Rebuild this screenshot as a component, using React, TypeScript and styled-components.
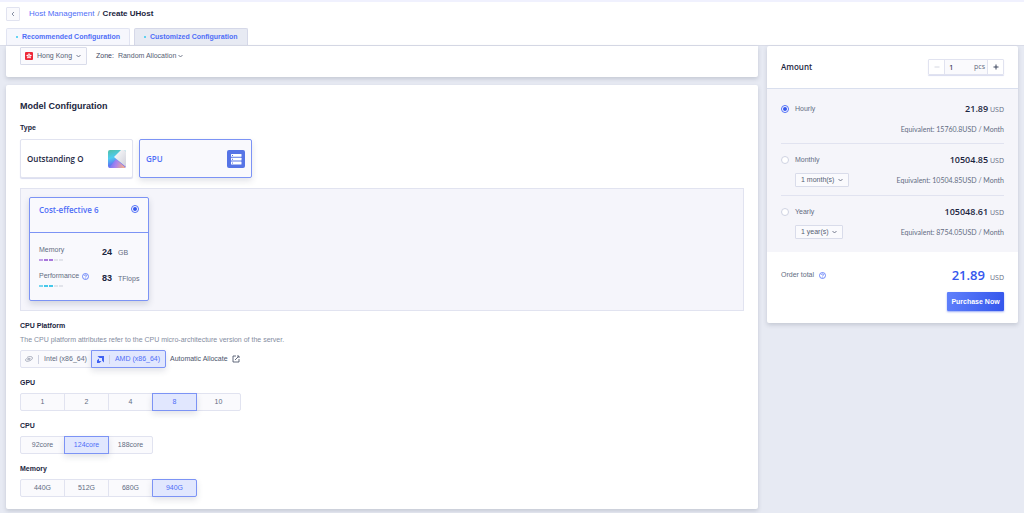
import React, { useState } from "react";
import styled, { createGlobalStyle, css } from "styled-components";

const sans = `"Liberation Sans", Arial, sans-serif`;
const human = `"Open Sans", "Noto Sans", sans-serif`;
const note = `Lato, "Open Sans", sans-serif`;
const blue = "#4f6ef7";
const ink = "#1b2540";
const grey = "#636c82";
const line = "#e1e3f0";

const GlobalStyle = createGlobalStyle`
  * { box-sizing: border-box; }
  html { min-height: 100%; background: #e7eaf3; }
  body { margin: 0; font: 7px/10px ${sans}; color: ${grey}; }
  button, input, select { font: inherit; color: inherit; margin: 0; }
  button, select { cursor: pointer; }
  h1, h2, h3, p, fieldset { margin: 0; padding: 0; border: 0; }
`;

const Header = styled.header`
  background: #fff;
  border-top: 2px solid #f0f1fe;
  border-bottom: 1px solid #d9dce8;
  padding: 5px 6px 0;
`;
const Breadcrumb = styled.nav`
  display: flex;
  align-items: center;
  gap: 3px;
  height: 14px;
  font-size: 8px;
  a { color: ${blue}; text-decoration: none; }
  strong { color: ${ink}; }
`;
const BackButton = styled.button`
  display: grid;
  place-items: center;
  width: 14px;
  height: 14px;
  margin-right: 6px;
  padding: 0;
  background: #fafafd;
  border: 1px solid ${line};
  border-radius: 1px;
`;
const Tabs = styled.div`
  display: flex;
  gap: 4px;
  margin-top: 7px;
`;
const Tab = styled.button<{ $active?: boolean }>`
  display: flex;
  align-items: center;
  gap: 4px;
  height: 17px;
  padding: 0 9px;
  border: 1px solid ${(p) => (p.$active ? "#d5d8e8" : "#e1e4f2")};
  border-bottom: 0;
  border-radius: 2px 2px 0 0;
  background: ${(p) => (p.$active ? "#e7eaf3" : "#f6f7fd")};
  color: ${blue};
  font-weight: 700;
  &::before { content: ""; width: 2px; height: 2px; border-radius: 50%; background: #35c8ef; }
`;

const Page = styled.main`
  display: flex;
  align-items: flex-start;
  gap: 9px;
  padding: 0 6px 5px;
`;
const Column = styled.div`
  flex: 1;
  min-width: 0;
  display: flex;
  flex-direction: column;
  gap: 8px;
`;
const Card = styled.section`
  background: #fff;
  border-radius: 2px;
  box-shadow: 0 2px 4px rgba(60, 68, 90, 0.2);
`;
const RegionCard = styled(Card)`
  display: flex;
  align-items: center;
  gap: 9px;
  padding: 1px 14px 12px;
  border-radius: 0 0 2px 2px;
`;
const ModelCard = styled(Card)`
  padding: 15px 14px 12px;
`;

const SelectBox = styled.div<{ $framed?: boolean; $width: number }>`
  display: grid;
  align-items: center;
  width: ${(p) => p.$width}px;
  color: #555e74;
  > * { grid-area: 1 / 1; }
  > svg { pointer-events: none; }
  > svg:last-child { justify-self: end; margin-right: 5px; }
  ${(p) => p.$framed && css`
    border: 1px solid #d9dcea;
    border-radius: 1px;
    background: #fafafd;
  `}
`;
const Select = styled.select<{ $height: number; $indent: number }>`
  appearance: none;
  width: 100%;
  height: ${(p) => p.$height}px;
  padding: 0 10px 0 ${(p) => p.$indent}px;
  border: 0;
  background: none;
  outline: none;
`;
const ZoneField = styled.div`
  display: flex;
  align-items: center;
  gap: 4px;
  color: #3d465e;
`;

const Title = styled.h2`
  font-size: 9px;
  line-height: 12px;
  color: ${ink};
`;
const Label = styled.h3`
  font-size: 7px;
  line-height: 10px;
  color: ${ink};
`;
const Hint = styled.p`
  margin-top: 4px;
  color: #858da1;
`;
const Group = styled.section`
  margin-top: 10px;
`;
const TypeGroup = styled(Group)`
  margin-top: 11px;
`;
const TypeRow = styled.div`
  display: flex;
  gap: 6px;
  margin-top: 6px;
`;
const TypeCard = styled.button<{ $active?: boolean }>`
  display: flex;
  align-items: center;
  justify-content: space-between;
  width: 113px;
  height: 39px;
  padding: 0 6px;
  border: 1px solid ${(p) => (p.$active ? "#7c93f5" : line)};
  border-radius: 2px;
  background: ${(p) => (p.$active ? "#f9f9fd" : "#fff")};
  box-shadow: ${(p) => (p.$active ? "0 3px 6px rgba(50, 60, 90, 0.14)" : "0 1px 1px #d9dcf0")};
  color: ${(p) => (p.$active ? blue : ink)};
  font: 600 8px/10px ${human};
`;
const ModelPanel = styled.div`
  display: flex;
  margin-top: 10px;
  padding: 8px;
  height: 123px;
  background: #f5f5fb;
  border: 1px solid ${line};
`;
const ModelOption = styled.label`
  display: block;
  width: 120px;
  height: 104px;
  border: 1px solid #7c93f5;
  border-radius: 2px;
  background: #f9f9fd;
  box-shadow: 0 3px 6px rgba(50, 60, 90, 0.18);
`;
const OptionHead = styled.div`
  display: flex;
  align-items: flex-start;
  justify-content: space-between;
  height: 35px;
  padding: 7px 9px 0;
  border-bottom: 1px solid #7c93f5;
  color: ${blue};
  font: 600 8px/10px ${human};
`;
const Specs = styled.div`
  display: grid;
  gap: 5px;
  padding: 12px 8px 0 9px;
`;
const Spec = styled.div`
  display: grid;
  grid-template-columns: 1fr 16px 22px;
  align-items: start;
  height: 21px;
`;
const SpecName = styled.div`
  display: flex;
  align-items: center;
  gap: 3px;
`;
const SpecValue = styled.strong`
  margin-top: 2px;
  font-size: 9px;
  color: ${ink};
`;
const SpecUnit = styled.span`
  margin-top: 3px;
`;
const Meter = styled.div<{ $color: string }>`
  display: flex;
  gap: 1px;
  margin-top: 4px;
  i { width: 4px; height: 2px; background: #e2e4eb; }
  i:nth-child(-n + 3) { background: ${(p) => p.$color}; }
  i:first-child { opacity: 0.7; }
`;

const Radio = styled.input`
  appearance: none;
  flex: none;
  display: grid;
  place-items: center;
  width: 8px;
  height: 8px;
  border: 1px solid #cfd3e2;
  border-radius: 50%;
  background: #fff;
  &:checked { border-color: ${blue}; }
  &:checked::before { content: ""; width: 4px; height: 4px; border-radius: 50%; background: #3557ee; }
`;

const ButtonRow = styled.div`
  display: flex;
  align-items: center;
  margin-top: 5px;
`;
const Segment = styled.button<{ $active?: boolean; $width?: number }>`
  display: flex;
  align-items: center;
  justify-content: center;
  gap: 5px;
  position: relative;
  z-index: ${(p) => (p.$active ? 1 : 0)};
  width: ${(p) => p.$width ?? 45}px;
  height: 18px;
  padding: 0;
  border: 1px solid ${(p) => (p.$active ? "#7c93f5" : line)};
  background: ${(p) => (p.$active ? "#e1e7fe" : "#fafafd")};
  box-shadow: ${(p) => (p.$active ? "0 3px 6px rgba(50, 60, 90, 0.14)" : "none")};
  color: ${(p) => (p.$active ? blue : grey)};
  & + & { margin-left: -1px; }
  &:first-child { border-radius: 2px 0 0 2px; }
  &:last-of-type { border-radius: 0 2px 2px 0; }
`;
const Rule = styled.span`
  width: 1px;
  height: 9px;
  background: #cdd1e0;
`;
const AutoLink = styled.a`
  display: flex;
  align-items: center;
  gap: 4px;
  margin-left: 4px;
  color: #4b546b;
  text-decoration: none;
`;

const Summary = styled(Card)`
  flex: 0 0 251px;
  font-family: ${human};
`;
const AmountRow = styled.div`
  display: flex;
  align-items: center;
  justify-content: space-between;
  height: 43px;
  padding: 0 14px;
  border-bottom: 1px solid #d9dfee;
  label { color: ${ink}; font-weight: 600; font-size: 8px; }
`;
const Stepper = styled.div`
  display: flex;
  height: 16px;
  border: 1px solid ${line};
  border-radius: 1px;
  box-shadow: 0 1px 1px #d9dcf0;
`;
const StepButton = styled.button`
  display: grid;
  place-items: center;
  width: 15px;
  padding: 0;
  border: 0;
  background: #fff;
  color: #3d465e;
  &:disabled { color: #d5d8e2; }
`;
const StepField = styled.div`
  display: flex;
  align-items: center;
  width: 44px;
  padding: 0 2px 0 4px;
  border: solid ${line};
  border-width: 0 1px;
  background: #fafafd;
  input { flex: 1; min-width: 0; padding: 0; border: 0; background: none; outline: none; color: ${ink}; font-size: 8px; }
`;
const Plans = styled.fieldset`
  padding: 3px 14px 6px;
  background: #f5f5fa;
`;
const Plan = styled.div`
  display: grid;
  grid-template-columns: 1fr auto;
  grid-template-rows: 14px 14px;
  row-gap: 6px;
  align-items: center;
  height: 51px;
  padding-top: 10px;
  & + & { height: 52px; padding-top: 9px; border-top: 1px solid ${line}; }
  &:last-child { height: 51px; }
`;
const PlanName = styled.label`
  display: flex;
  align-items: center;
  gap: 6px;
  font-family: ${sans};
`;
const PlanTerm = styled.div`
  padding-left: 14px;
  font-family: ${sans};
`;
const Price = styled.div`
  text-align: right;
  strong { color: ${ink}; font-size: 9px; font-weight: 600; }
`;
const Equivalent = styled.div`
  text-align: right;
  font-family: ${note};
`;
const TotalArea = styled.div`
  padding: 14px 14px 12px;
`;
const TotalRow = styled.div`
  display: flex;
  align-items: center;
  justify-content: space-between;
  height: 18px;
`;
const TotalLabel = styled.div`
  display: flex;
  align-items: center;
  gap: 5px;
  font-family: ${sans};
`;
const Total = styled.div`
  display: flex;
  align-items: baseline;
  gap: 5px;
  strong { color: #3557ee; font-size: 13px; line-height: 18px; font-weight: 600; }
`;
const PurchaseButton = styled.button`
  display: block;
  width: 57px;
  height: 19px;
  margin: 8px 0 0 auto;
  padding: 0;
  border: 0;
  border-radius: 1px;
  background: linear-gradient(100deg, #5f80fb, #3456ec);
  box-shadow: 0 1px 2px rgba(53, 87, 238, 0.5);
  color: #fff;
  font: 700 7px/10px ${sans};
`;

const Chevron = () => (
  <svg width="5" height="4" viewBox="0 0 5 4" fill="none" stroke="currentColor" strokeWidth="0.8" aria-hidden="true">
    <path d="M0.5 1 2.5 3 4.5 1" />
  </svg>
);
const BackIcon = () => (
  <svg width="4" height="6" viewBox="0 0 4 6" fill="none" stroke="#7b8399" strokeWidth="0.9" aria-hidden="true">
    <path d="M3 1 1 3l2 2" />
  </svg>
);
const FlagIcon = styled.svg`
  margin-left: 4px;
`;
const Flag = () => (
  <FlagIcon width="8" height="8" viewBox="0 0 16 16" aria-hidden="true">
    <rect width="16" height="16" rx="2" fill="#ee2737" />
    <g fill="#fff">
      {[0, 72, 144, 216, 288].map((a) => (
        <ellipse key={a} cx="8" cy="5" rx="1.5" ry="2.5" transform={`rotate(${a} 8 8)`} />
      ))}
    </g>
    <circle cx="8" cy="8" r="1.2" fill="#ee2737" />
  </FlagIcon>
);
const Question = () => (
  <svg width="7" height="7" viewBox="0 0 14 14" fill="none" stroke={blue} strokeWidth="1.6" aria-hidden="true">
    <circle cx="7" cy="7" r="6" />
    <path d="M5 5.7C5 3.2 9 3.2 9 5.5 9 7 7 7 7 8.6M7 9.8v1.2" />
  </svg>
);
const PrismIcon = () => (
  <svg width="18" height="18" viewBox="0 0 18 18" aria-hidden="true">
    <defs>
      <linearGradient id="prismLeft" x1="0" y1="0" x2="0.3" y2="1">
        <stop offset="0" stopColor="#52bfa6" />
        <stop offset="0.45" stopColor="#4fcdf0" />
        <stop offset="0.8" stopColor="#5a7cf2" />
        <stop offset="1" stopColor="#7d6bf0" />
      </linearGradient>
      <linearGradient id="prismBase" x1="0" y1="0" x2="1" y2="0.2">
        <stop offset="0" stopColor="#5674f4" />
        <stop offset="0.5" stopColor="#a883ee" />
        <stop offset="1" stopColor="#f0ac90" />
      </linearGradient>
      <linearGradient id="prismLight" x1="0" y1="0" x2="1" y2="1">
        <stop offset="0" stopColor="#ffffff" />
        <stop offset="1" stopColor="#cfd0da" />
      </linearGradient>
      <clipPath id="prismClip"><rect width="18" height="18" rx="2" /></clipPath>
    </defs>
    <g clipPath="url(#prismClip)">
      <rect width="18" height="18" fill="url(#prismLeft)" />
      <path d="M1 18 8 9l10 9z" fill="url(#prismBase)" />
      <path d="M13 0h5v17L6 7z" fill="url(#prismLight)" />
    </g>
  </svg>
);
const ServerIcon = () => (
  <svg width="18" height="18" viewBox="0 0 18 18" aria-hidden="true">
    <rect width="18" height="18" rx="2" fill="#5674e6" />
    <g fill="#fff">
      <rect x="4" y="4" width="10.5" height="2.8" rx="0.5" />
      <rect x="4" y="7.8" width="10.5" height="2.8" rx="0.5" />
      <rect x="4" y="11.6" width="10.5" height="2.8" rx="0.5" />
    </g>
    <g fill="#5674e6">
      <rect x="5" y="5" width="1" height="1" />
      <rect x="5" y="8.8" width="1" height="1" />
      <rect x="5" y="12.6" width="1" height="1" />
    </g>
  </svg>
);
const IntelIcon = () => (
  <svg width="8" height="6" viewBox="0 0 16 12" fill="none" stroke="#9399ab" strokeWidth="1.5" aria-hidden="true">
    <path d="M4 2.8C9 .2 15 .6 15 3.8c0 3-4 5.6-8.5 6.6C3 11 1 10.2 1 8c0-1.2 1-2.4 2.4-3.2" />
    <path d="M4.5 7.2h6M5 5h6" />
  </svg>
);
const AmdIcon = () => (
  <svg width="7" height="7" viewBox="0 0 14 14" fill="#3f62f2" aria-hidden="true">
    <path d="M1 0h13v13l-4-4V4H5z" />
    <path d="M4 5v5h5l-4 4H0V9z" />
  </svg>
);
const EditIcon = () => (
  <svg width="8" height="8" viewBox="0 0 16 16" fill="none" stroke="#3d465e" strokeWidth="1.6" aria-hidden="true">
    <path d="M8 2H2v12h12V8M6 10l7-7M10 2h4v4" />
  </svg>
);
const Minus = () => (
  <svg width="6" height="6" viewBox="0 0 6 6" stroke="currentColor" aria-hidden="true"><path d="M0.5 3h5" /></svg>
);
const Plus = () => (
  <svg width="6" height="6" viewBox="0 0 6 6" stroke="currentColor" aria-hidden="true"><path d="M0.5 3h5M3 0.5v5" /></svg>
);

function Choice({ title, options, initial }: { title: string; options: string[]; initial: string }) {
  const [value, setValue] = useState(initial);
  return (
    <Group>
      <Label>{title}</Label>
      <ButtonRow role="group" aria-label={title}>
        {options.map((o) => (
          <Segment key={o} type="button" $active={o === value} aria-pressed={o === value} onClick={() => setValue(o)}>
            {o}
          </Segment>
        ))}
      </ButtonRow>
    </Group>
  );
}

const plans = [
  { id: "hourly", name: "Hourly", price: "21.89", eq: "15760.8USD" },
  { id: "monthly", name: "Monthly", price: "10504.85", eq: "10504.85USD", term: "1 month(s)", width: 54 },
  { id: "yearly", name: "Yearly", price: "105048.61", eq: "8754.05USD", term: "1 year(s)", width: 48 },
];

export default function App() {
  const [amount, setAmount] = useState(1);
  const [plan, setPlan] = useState("hourly");
  const [platform, setPlatform] = useState("amd");
  return (
    <>
      <GlobalStyle />
      <Header>
        <Breadcrumb aria-label="Breadcrumb">
          <BackButton type="button" aria-label="Back"><BackIcon /></BackButton>
          <a href="#hosts">Host Management</a>
          <span>/</span>
          <strong>Create UHost</strong>
        </Breadcrumb>
        <Tabs role="tablist">
          <Tab type="button" role="tab" aria-selected="false">Recommended Configuration</Tab>
          <Tab type="button" role="tab" aria-selected="true" $active>Customized Configuration</Tab>
        </Tabs>
      </Header>
      <Page>
        <Column>
          <RegionCard>
            <SelectBox $framed $width={67}>
              <Select $height={16} $indent={16} aria-label="Region"><option>Hong Kong</option></Select>
              <Flag />
              <Chevron />
            </SelectBox>
            <ZoneField>
              <label htmlFor="zone">Zone:</label>
              <SelectBox $width={70}>
                <Select id="zone" $height={16} $indent={0}><option>Random Allocation</option></Select>
                <Chevron />
              </SelectBox>
            </ZoneField>
          </RegionCard>
          <ModelCard>
            <Title>Model Configuration</Title>
            <TypeGroup>
              <Label>Type</Label>
              <TypeRow>
                <TypeCard type="button">Outstanding O<PrismIcon /></TypeCard>
                <TypeCard type="button" $active>GPU<ServerIcon /></TypeCard>
              </TypeRow>
              <ModelPanel>
                <ModelOption>
                  <OptionHead>
                    Cost-effective 6
                    <Radio type="radio" name="model" defaultChecked />
                  </OptionHead>
                  <Specs>
                    <Spec>
                      <div>
                        <SpecName>Memory</SpecName>
                        <Meter $color="#a978dc"><i /><i /><i /><i /><i /></Meter>
                      </div>
                      <SpecValue>24</SpecValue>
                      <SpecUnit>GB</SpecUnit>
                    </Spec>
                    <Spec>
                      <div>
                        <SpecName>Performance <Question /></SpecName>
                        <Meter $color="#45c8ea"><i /><i /><i /><i /><i /></Meter>
                      </div>
                      <SpecValue>83</SpecValue>
                      <SpecUnit>TFlops</SpecUnit>
                    </Spec>
                  </Specs>
                </ModelOption>
              </ModelPanel>
            </TypeGroup>
            <Group>
              <Label>CPU Platform</Label>
              <Hint>The CPU platform attributes refer to the CPU micro-architecture version of the server.</Hint>
              <ButtonRow>
                <Segment type="button" $width={72} $active={platform === "intel"} onClick={() => setPlatform("intel")}>
                  <IntelIcon /><Rule />Intel (x86_64)
                </Segment>
                <Segment type="button" $width={75} $active={platform === "amd"} onClick={() => setPlatform("amd")}>
                  <AmdIcon /><Rule />AMD (x86_64)
                </Segment>
                <AutoLink href="#auto">Automatic Allocate <EditIcon /></AutoLink>
              </ButtonRow>
            </Group>
            <Choice title="GPU" options={["1", "2", "4", "8", "10"]} initial="8" />
            <Choice title="CPU" options={["92core", "124core", "188core"]} initial="124core" />
            <Choice title="Memory" options={["440G", "512G", "680G", "940G"]} initial="940G" />
          </ModelCard>
        </Column>
        <Summary as="aside">
          <AmountRow>
            <label htmlFor="amount">Amount</label>
            <Stepper>
              <StepButton type="button" aria-label="Decrease" disabled={amount <= 1} onClick={() => setAmount(amount - 1)}><Minus /></StepButton>
              <StepField>
                <input id="amount" value={amount} onChange={(e) => setAmount(Number(e.target.value) || 1)} />
                <span>pcs</span>
              </StepField>
              <StepButton type="button" aria-label="Increase" onClick={() => setAmount(amount + 1)}><Plus /></StepButton>
            </Stepper>
          </AmountRow>
          <Plans aria-label="Billing">
            {plans.map((p) => (
              <Plan key={p.id}>
                <PlanName>
                  <Radio type="radio" name="plan" checked={plan === p.id} onChange={() => setPlan(p.id)} />
                  {p.name}
                </PlanName>
                <Price><strong>{p.price}</strong> USD</Price>
                <PlanTerm>
                  {p.term && (
                    <SelectBox $framed $width={p.width ?? 54}>
                      <Select $height={12} $indent={5} aria-label={`${p.name} term`}><option>{p.term}</option></Select>
                      <Chevron />
                    </SelectBox>
                  )}
                </PlanTerm>
                <Equivalent>Equivalent: {p.eq} / Month</Equivalent>
              </Plan>
            ))}
          </Plans>
          <TotalArea>
            <TotalRow>
              <TotalLabel>Order total <Question /></TotalLabel>
              <Total><strong>21.89</strong> USD</Total>
            </TotalRow>
            <PurchaseButton type="button">Purchase Now</PurchaseButton>
          </TotalArea>
        </Summary>
      </Page>
    </>
  );
}
